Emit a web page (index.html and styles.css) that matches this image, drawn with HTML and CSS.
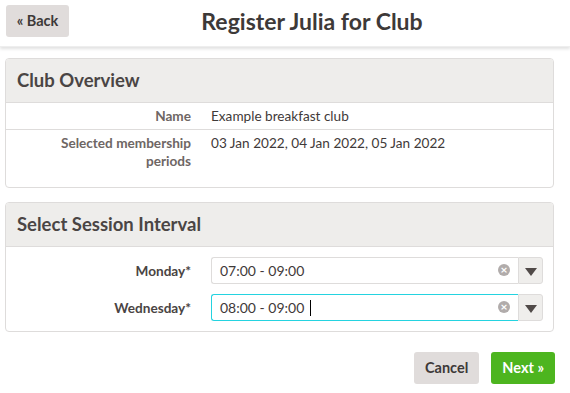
FILE: index.html
```html
<!DOCTYPE html>
<html lang="en">
<head>
    <meta charset="UTF-8">
    <meta name="viewport" content="width=device-width, initial-scale=1.0">
    <title>Register Julia for Club</title>
    <link rel="stylesheet" href="styles.css">
</head>
<body>
    <header class="topbar">
        <a class="btn btn-back" href="#">&laquo; Back</a>
        <h1>Register Julia for Club</h1>
    </header>
    <div class="page">
        <div class="panel">
            <div class="panel-head">Club Overview</div>
            <div class="info-row">
                <div class="label">Name</div>
                <div class="value">Example breakfast club</div>
            </div>
            <div class="info-row tall">
                <div class="label">Selected membership periods</div>
                <div class="value">03 Jan 2022, 04 Jan 2022, 05 Jan 2022</div>
            </div>
        </div>
        <div class="panel">
            <div class="panel-head">Select Session Interval</div>
            <div class="form-body">
                <div class="form-row">
                    <label class="label strong">Monday*</label>
                    <div class="select">
                        <div class="select-box">07:00 - 09:00<span class="clear">&times;</span></div>
                        <div class="select-arrow"></div>
                    </div>
                </div>
                <div class="form-row">
                    <label class="label strong">Wednesday*</label>
                    <div class="select">
                        <div class="select-box focus">08:00 - 09:00 <span class="caret"></span><span class="clear">&times;</span></div>
                        <div class="select-arrow"></div>
                    </div>
                </div>
            </div>
        </div>
        <div class="actions">
            <a class="btn btn-cancel" href="#">Cancel</a>
            <a class="btn btn-next" href="#">Next &raquo;</a>
        </div>
    </div>
</body>
</html>
```

FILE: styles.css
```css
body {
    margin: 0;
    font-family: Lato, 'Open Sans', Arial, sans-serif;
    font-size: 13.6px;
    color: #3f3a39;
    background: #fff;
}
.topbar {
    display: flex;
    align-items: flex-start;
    height: 47px;
    padding: 5px 15px 0 6px;
    box-sizing: border-box;
    box-shadow: 0 2px 3px rgba(0, 0, 0, 0.12);
    border-bottom: 1px solid #eeeeee;
}
.topbar h1 {
    flex: 1;
    margin: 0;
    text-align: center;
    font-size: 23px;
    line-height: 32px;
    font-weight: 700;
    color: #3d3938;
}
.btn {
    display: inline-block;
    text-decoration: none;
    font-weight: 700;
    font-size: 14.5px;
    border-radius: 3px;
    box-sizing: border-box;
    text-align: center;
}
.btn-back {
    width: 63px;
    height: 32px;
    line-height: 32px;
    background: #e0dcdb;
    color: #3d3938;
}
.page {
    padding: 11px 16px 0 5px;
}
.panel {
    border: 1px solid #dedcdb;
    border-radius: 4px;
    margin-bottom: 14px;
    overflow: hidden;
}
.panel-head {
    background: #eeedeb;
    border-bottom: 1px solid #dedcdb;
    height: 43px;
    line-height: 43px;
    padding-left: 11px;
    font-size: 18.5px;
    font-weight: 700;
    color: #4a4544;
}
.info-row {
    display: grid;
    grid-template-columns: 185px 1fr;
    column-gap: 20px;
    padding: 4px 0;
    border-bottom: 1px solid #dedcdb;
    line-height: 18px;
}
.info-row:last-child {
    border-bottom: none;
}
.info-row.tall {
    padding-bottom: 17px;
}
.label {
    text-align: right;
    font-weight: 700;
    color: #6e6664;
    padding-left: 40px;
}
.label.strong {
    color: #4a4443;
}
.value {
    color: #3f3a39;
}
.form-body {
    padding: 10px 10px 10px 0;
}
.form-row {
    display: grid;
    grid-template-columns: 185px 1fr;
    column-gap: 20px;
    align-items: center;
    margin-bottom: 10px;
}
.form-row:last-child {
    margin-bottom: 0;
}
.select {
    display: flex;
    height: 27px;
}
.select-box {
    flex: 1;
    position: relative;
    border: 1px solid #dedcdb;
    border-right: none;
    border-radius: 3px 0 0 3px;
    padding-left: 8px;
    line-height: 25px;
    font-size: 14px;
    color: #3f3a39;
}
.select-box.focus {
    border-color: #24d3e0;
}
.caret {
    display: inline-block;
    width: 1px;
    height: 16px;
    background: #000;
    vertical-align: -3px;
    margin-left: 2px;
}
.clear {
    position: absolute;
    right: 8px;
    top: 6px;
    width: 12px;
    height: 12px;
    border-radius: 50%;
    background: #b1acab;
    color: #fff;
    font-size: 12px;
    line-height: 12px;
    text-align: center;
    font-weight: 700;
}
.select-arrow {
    width: 25px;
    background: #efeeec;
    border: 1px solid #dedcdb;
    border-radius: 0 3px 3px 0;
    box-sizing: border-box;
    position: relative;
}
.select-arrow::after {
    content: "";
    position: absolute;
    left: 6px;
    top: 10px;
    border-left: 6px solid transparent;
    border-right: 6px solid transparent;
    border-top: 8px solid #504a48;
}
.actions {
    display: flex;
    justify-content: flex-end;
    gap: 12px;
    padding-top: 6px;
    margin-right: -1px;
}
.btn-cancel,
.btn-next {
    height: 32px;
    line-height: 32px;
    padding: 0 11px;
}
.btn-cancel {
    background: #e0dcdb;
    color: #3d3938;
}
.btn-next {
    background: #4db51f;
    color: #fff;
}
```
